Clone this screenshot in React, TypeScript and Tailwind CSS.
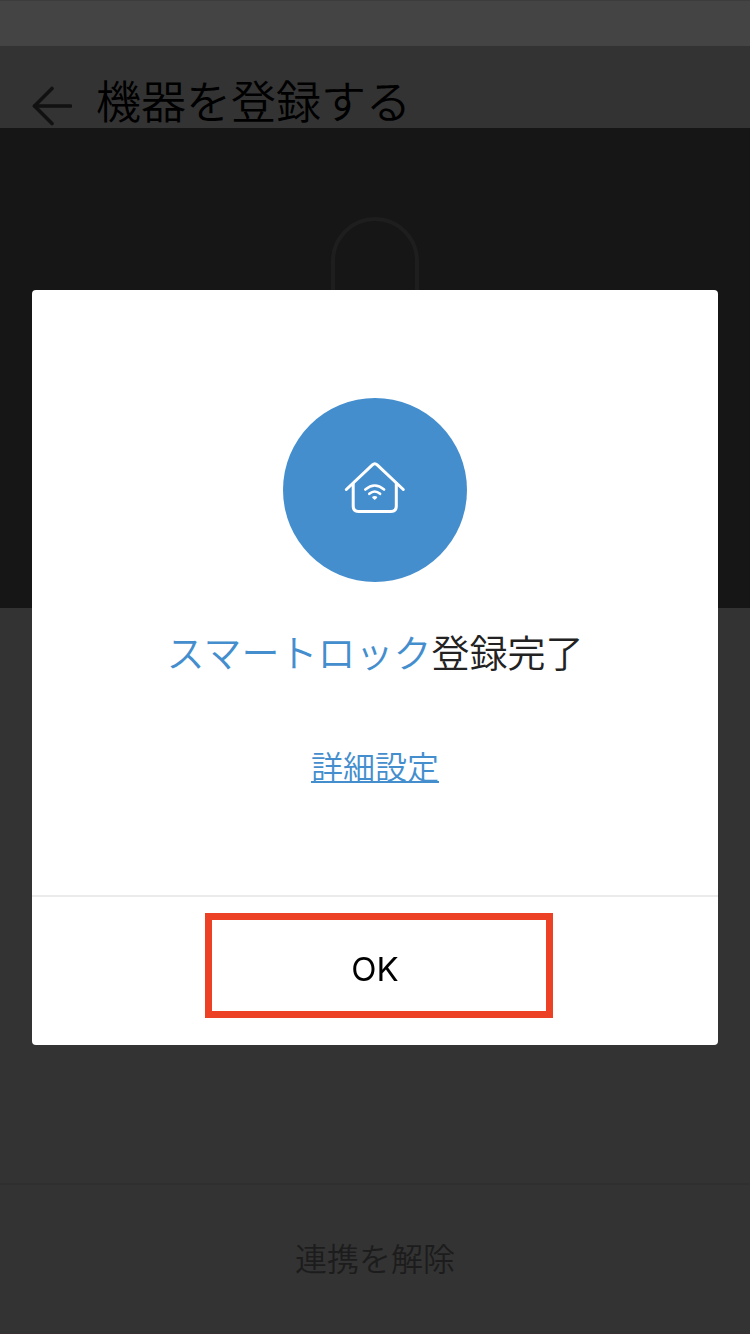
import React, { useState } from "react";

function BackArrowIcon() {
  return (
    <svg
      className="h-10 w-10"
      viewBox="0 0 40 40"
      fill="none"
      stroke="currentColor"
      strokeWidth="3.6"
      strokeLinecap="round"
      strokeLinejoin="round"
      aria-hidden="true"
    >
      <path d="M20 2.5 L2.5 20 L20 37.5" />
      <path d="M2.5 20 H38.5" />
    </svg>
  );
}

function ShackleIcon() {
  return (
    <svg
      className="h-24 w-22"
      viewBox="0 0 88 96"
      fill="none"
      stroke="currentColor"
      strokeWidth="4"
      aria-hidden="true"
    >
      <path d="M2 96 V44 A42 42 0 0 1 86 44 V96" />
    </svg>
  );
}

function SmartHomeIcon() {
  return (
    <svg
      className="h-16 w-16"
      viewBox="0 0 64 64"
      fill="none"
      stroke="currentColor"
      strokeWidth="3"
      strokeLinecap="round"
      strokeLinejoin="round"
      aria-hidden="true"
    >
      {/* roof and walls */}
      <path d="M3.3 31.5 L29.4 6.9 Q31.8 4.7 34.2 6.9 L60.3 31.5" />
      <path d="M10.2 25.5 V48 Q10.2 53.5 15.7 53.5 H47.8 Q53.3 53.5 53.3 48 V25.5" />
      {/* signal */}
      <path d="M22.3 31.5 Q31.7 23.5 41.1 31.5" strokeWidth="2.6" />
      <path d="M26.3 35.8 Q31.7 31.2 37.1 35.8" strokeWidth="2.6" />
      <path
        d="M29 38.9 Q31.7 37 34.4 38.9 Q34.3 40 31.7 42 Q29.1 40 29 38.9 Z"
        fill="currentColor"
        stroke="none"
      />
    </svg>
  );
}

interface CompleteDialogProps {
  deviceName: string;
  onClose: () => void;
}

function CompleteDialog({ deviceName, onClose }: CompleteDialogProps) {
  return (
    <div className="fixed inset-0 flex items-center justify-center px-8">
      <div
        role="dialog"
        aria-modal="true"
        aria-labelledby="dialog-title"
        className="w-full overflow-hidden rounded bg-white"
      >
        <div className="flex flex-col items-center pt-27 pb-26">
          <div className="flex h-46 w-46 items-center justify-center rounded-full bg-[#448ece] text-white">
            <SmartHomeIcon />
          </div>
          <h2 id="dialog-title" className="mt-[43px] text-[38px] leading-[52px] text-[#222222]">
            <span className="text-[#448ece]">{deviceName}</span>登録完了
          </h2>
          <a
            href="#settings"
            className="mt-[62px] text-[32px] leading-[52px] text-[#448ece] underline decoration-2 underline-offset-2"
          >
            詳細設定
          </a>
        </div>

        <div className="relative border-t-2 border-[#ebebeb]">
          <button
            type="button"
            onClick={onClose}
            className="h-37 w-full pb-0.5 font-[Inter,'Noto_Sans_CJK_JP',sans-serif] text-[33px] font-normal text-black"
          >
            OK
          </button>
          {/* Highlight around the confirm button */}
          <div
            aria-hidden="true"
            className="pointer-events-none absolute top-4 right-[165px] left-[173px] h-[105px] border-7 border-[#ec4125]"
          />
        </div>
      </div>
    </div>
  );
}

export default function App() {
  const [isOpen, setIsOpen] = useState(true);

  return (
    <div
      lang="ja"
      className="flex min-h-screen flex-col border-b border-[#382f33] bg-[#333333] font-['Noto_Sans_CJK_JP',sans-serif] font-[350]"
    >
      <div className="h-[46px] border-t border-[#3c3c3c] bg-[#444444]" />

      <header className="flex h-[82px] items-end gap-6 px-8 pb-0.5">
        <button type="button" aria-label="戻る" className="text-[#111111]">
          <BackArrowIcon />
        </button>
        <h1 className="text-[45px] leading-[52px] text-black">機器を登録する</h1>
      </header>

      <section className="flex h-[480px] justify-center bg-[#161616] pt-[89px] text-[#1e1e1e]">
        <ShackleIcon />
      </section>

      <div className="grow" />

      <footer className="border-t-2 border-[#2f2f2f]">
        <button type="button" className="h-37 w-full pb-1 text-[32px] text-[#1c1c1c]">
          連携を解除
        </button>
      </footer>

      {isOpen && <CompleteDialog deviceName="スマートロック" onClose={() => setIsOpen(false)} />}
    </div>
  );
}
